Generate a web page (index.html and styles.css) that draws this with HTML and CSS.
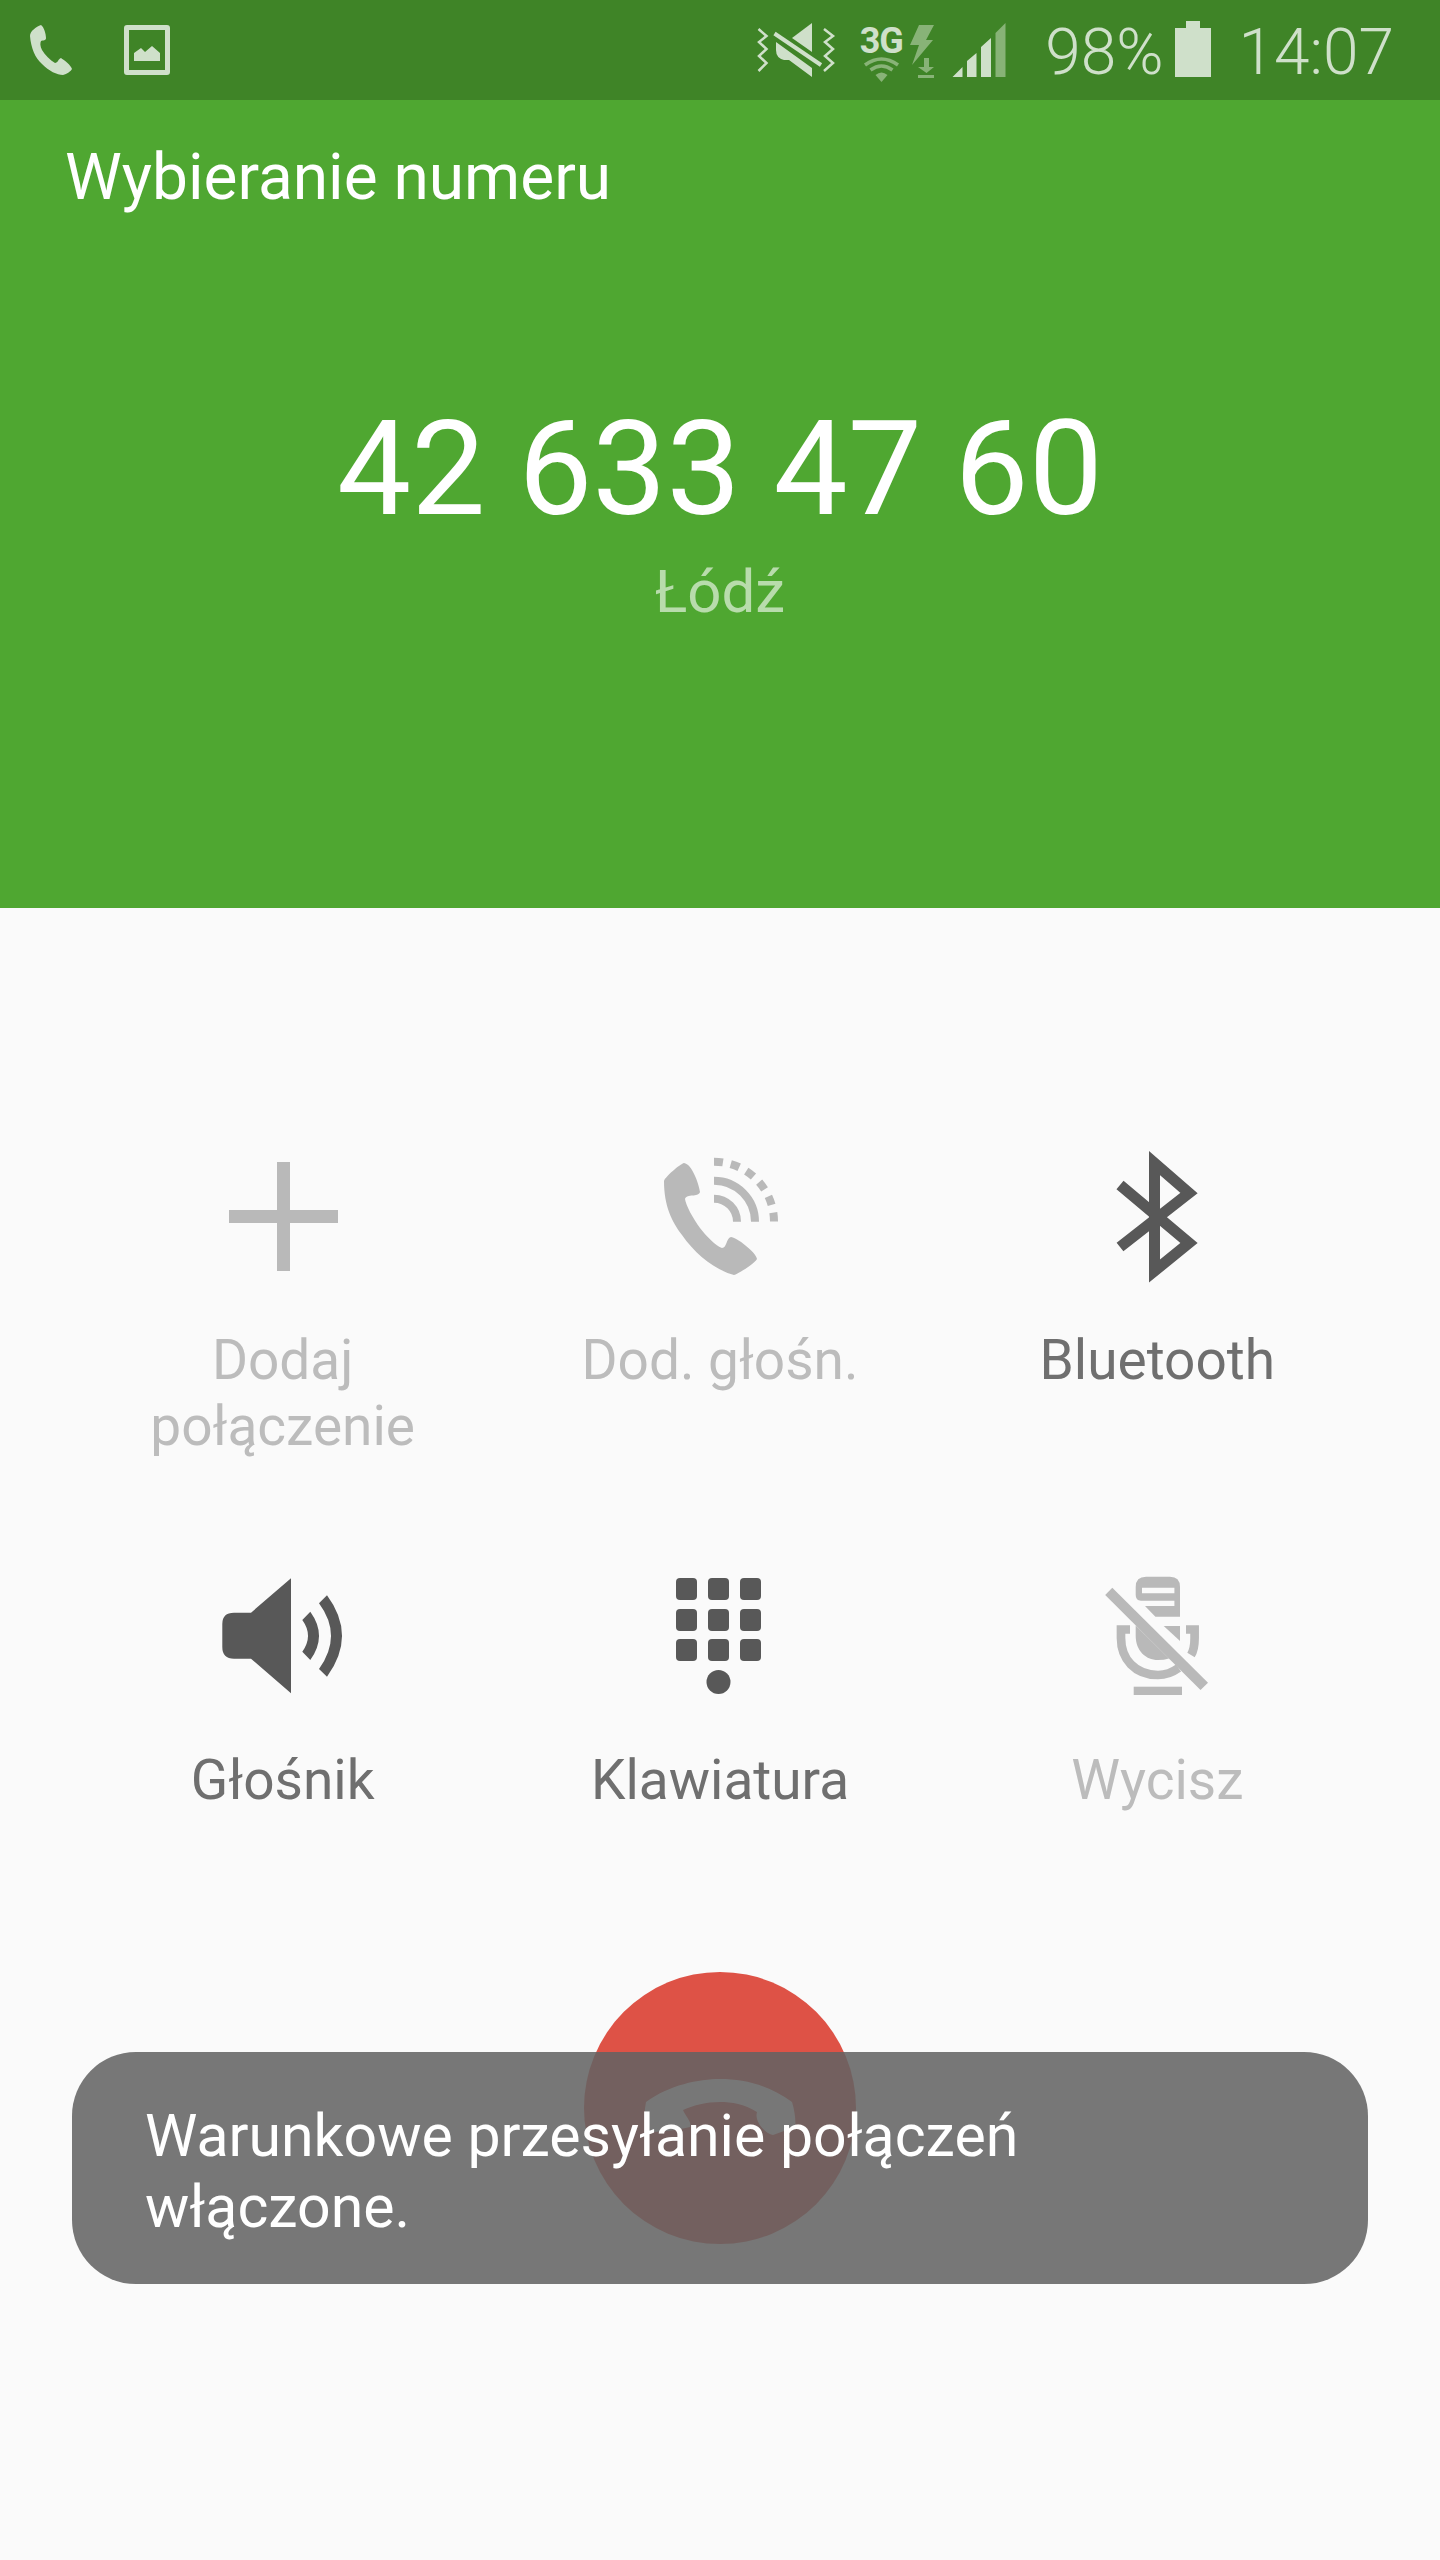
FILE: index.html
```html
<!DOCTYPE html>
<html lang="pl">
<head>
  <meta charset="UTF-8">
  <meta name="viewport" content="width=device-width, initial-scale=1.0">
  <title>Wybieranie numeru</title>
  <link rel="stylesheet" href="styles.css">
</head>
<body>
  <div class="screen">
    <div class="status-bar">
      <svg class="st-phone" width="42" height="100" viewBox="0 0 42 100">
        <path d="M11 25 C6 27 0 31 0 36 C1 48 5 58 12 64 C19 71 27 75 33 75 C37 74 41 71 42 69 C41 65 34 60 31 58 C28 59 28 63 25 63 C20 60 15 55 12 50 C10 46 10 43 11 41 C13 40 16 41 16 38 C16 34 14 27 11 25Z"/>
      </svg>
      <svg class="st-picture" width="46" height="100" viewBox="0 0 46 100">
        <path fill-rule="evenodd" d="M3 25 H43 Q46 25 46 28 V72 Q46 75 43 75 H3 Q0 75 0 72 V28 Q0 25 3 25Z M5 30 V70 H41 V30Z"/>
        <path d="M10 61 V53 L17 48 L21 52 L28 46 L36 53 V61Z"/>
      </svg>
      <svg class="st-mute" width="80" height="100" viewBox="0 0 80 100">
        <path class="line" d="M2.5 29 L10.5 36 L3 42 L10.5 49 L3 56 L10.5 63 L2.5 71"/>
        <path class="line" d="M68 29 L77 36 L69 42 L77 49 L69 56 L77 63 L68 71"/>
        <path d="M56 23 L36 38 L56 52Z"/>
        <path d="M20 42 L56 68 V77 L33 60 H28 Q20 58 20 50Z"/>
        <path class="line slash" d="M18.5 33.5 L65 65"/>
      </svg>
      <div class="st-network">
        <span class="st-3g">3G</span>
        <svg class="st-wifi" width="37" height="26" viewBox="0 0 37 26">
          <path class="arc" d="M2 9 Q18.5 -3 35 9"/>
          <path class="arc" d="M7.5 14 Q18.5 6 29.5 14"/>
          <path d="M18.5 26 L12.5 19 Q18.5 14 24.5 19Z" class="fill"/>
        </svg>
      </div>
      <svg class="st-charge" width="25" height="100" viewBox="0 0 25 100">
        <path d="M9 25 H24 L16 40 H23 L2 65 L9 45 H0Z"/>
        <path d="M14 58 H19 V67 H24 L16.5 73 L8 67 H14Z M8 75 H24 V78 H8Z"/>
      </svg>
      <svg class="st-signal" width="54" height="100" viewBox="0 0 54 100">
        <path d="M0.5 77 L10.5 67 V77Z M15 77 V61 L24.5 53 V77Z M29 77 V47 L39 38 V77Z"/>
        <path class="dim" d="M43.5 77 V33 L53.5 23 V77Z"/>
      </svg>
      <span class="st-percent">98%</span>
      <svg class="st-battery" width="36" height="100" viewBox="0 0 36 100">
        <path d="M11 21 H25 V28 H36 V77 H0 V28 H11Z"/>
      </svg>
      <span class="st-time">14:07</span>
    </div>

    <div class="call-header">
      <div class="call-state">Wybieranie numeru</div>
      <div class="call-number">42 633 47 60</div>
      <div class="call-place">Łódź</div>
    </div>

    <div class="call-body">
      <div class="actions">
        <div class="action disabled">
          <svg width="160" height="140" viewBox="0 0 160 140">
            <path d="M74 16 H87 V64 H135 V77 H87 V125 H74 V77 H26 V64 H74Z"/>
          </svg>
          <div class="action-label">Dodaj<br>połączenie</div>
        </div>
        <div class="action disabled">
          <svg width="160" height="140" viewBox="0 0 160 140">
            <path d="M44 17 C40 18 25 31 24 35 C24 60 32 76 42 89 C55 108 75 124 94 129 C98 128 114 118 117 113 C116 106 96 91 91 91 C86 92 87 102 82 102 C76 100 66 90 60 82 C53 72 46 60 45 53 C47 47 58 52 60 46 C59 38 52 18 44 17Z"/>
            <path class="wave" d="M74 52.7 A23 23 0 0 1 97 75.7"/>
            <path class="wave" d="M74 34.7 A41 41 0 0 1 115 75.7"/>
            <path class="wave" stroke-dasharray="9 8" d="M74 15.7 A60 60 0 0 1 134 75.7"/>
          </svg>
          <div class="action-label">Dod. głośn.</div>
        </div>
        <div class="action">
          <svg width="160" height="140" viewBox="0 0 160 140">
            <path class="bt" d="M43 39 L112 97 L77.5 125 V17 L112 47 L43 101"/>
          </svg>
          <div class="action-label">Bluetooth</div>
        </div>
        <div class="action">
          <svg width="160" height="140" viewBox="0 0 160 140">
            <path d="M31 46.7 H48 L88 12.3 V127.3 L48 92.7 H31 Q19.3 92.7 19.3 81 V58 Q19.3 46.7 31 46.7Z"/>
            <path d="M99.3 54 L107.3 45.7 Q124.7 69.7 107.3 94 L99.3 85.7 Q110.7 69.7 99.3 54Z"/>
            <path d="M116 37.3 L124 29.3 Q154 69.7 124 110.7 L116 103 Q140 69.7 116 37.3Z"/>
          </svg>
          <div class="action-label">Głośnik</div>
        </div>
        <div class="action">
          <svg width="160" height="140" viewBox="0 0 160 140">
            <rect x="36" y="12" width="21" height="22" rx="4"/>
            <rect x="68" y="12" width="21" height="22" rx="4"/>
            <rect x="100" y="12" width="21" height="22" rx="4"/>
            <rect x="36" y="43" width="21" height="22" rx="4"/>
            <rect x="68" y="43" width="21" height="22" rx="4"/>
            <rect x="100" y="43" width="21" height="22" rx="4"/>
            <rect x="36" y="73" width="21" height="22" rx="4"/>
            <rect x="68" y="73" width="21" height="22" rx="4"/>
            <rect x="100" y="73" width="21" height="22" rx="4"/>
            <circle cx="78.5" cy="116" r="12"/>
          </svg>
          <div class="action-label">Klawiatura</div>
        </div>
        <div class="action disabled">
          <svg width="160" height="140" viewBox="0 0 160 140">
            <path fill-rule="evenodd" d="M58.7 21 Q58.7 10.7 69 10.7 H93 Q103 10.7 103 21 V50.7 H78.4 L68 40 H97.4 V34.7 H64 Q58.7 34.7 58.7 29Z M65 21.7 V27.3 H97.4 V21.7Z"/>
            <path d="M86.7 60 H103 V75Z"/>
            <path d="M58.7 59.5 V70 C58.7 84 68 94 81 94 Q87 94 92 92.5Z"/>
            <path class="mic-arm" d="M53 63.5 H44 V72 C44 93 58 109 81 109 C90 109 96 106 101.5 102"/>
            <path class="mic-arm" d="M109 63.5 H117.6 V72 C117.6 78 116.5 85 114 89"/>
            <path d="M28.2 29 L35.3 21.7 L131 116.7 L123.5 124Z"/>
            <rect x="56.7" y="120.7" width="48.3" height="8.3"/>
          </svg>
          <div class="action-label">Wycisz</div>
        </div>
      </div>

      <div class="end-call">
        <svg width="272" height="272" viewBox="0 0 272 272">
          <path d="M63 160 C60 150 60 140 62 130 C85 113 115 107 136 107 C160 107 185 113 208 130 C211 140 212 150 211 155 L189 163 C182 162 170 150 173 140 C160 132 148 130 136 130 C122 130 110 133 99 138 C102 145 108 150 106 155 C95 158 75 160 63 160Z"/>
        </svg>
      </div>
    </div>

    <div class="toast">Warunkowe przesyłanie połączeń włączone.</div>
  </div>
</body>
</html>
```

FILE: styles.css
```css
body {
  margin: 0;
  font-family: Roboto, "Noto Sans", sans-serif;
}

.screen {
  position: relative;
  width: 1440px;
  height: 2560px;
  overflow: hidden;
  background-color: #fafafa;
}

/* status bar */
.status-bar {
  display: flex;
  align-items: center;
  height: 100px;
  padding: 0 46px 0 30px;
  box-sizing: border-box;
  background-color: #3f8427;
  color: #cfe0ca;
  fill: #cfe0ca;
}

.st-picture {
  margin-left: 52px;
}

.st-mute {
  margin-left: auto;
}

.line {
  fill: none;
  stroke: #cfe0ca;
  stroke-width: 2.5;
}

.slash {
  stroke-width: 4;
}

.st-network {
  display: flex;
  flex-direction: column;
  align-items: center;
  width: 42px;
  margin-left: 24px;
  padding-top: 8px;
}

.st-3g {
  height: 30px;
  font-size: 36px;
  font-weight: 700;
  line-height: 30px;
  letter-spacing: -1px;
}

.st-wifi .arc {
  fill: none;
  stroke: #88b377;
  stroke-width: 3.5;
}

.st-wifi .fill {
  fill: #88b377;
}

.st-charge {
  margin-left: 8px;
  fill: #88b377;
}

.st-signal {
  margin-left: 17px;
}

.st-signal .dim {
  fill: #88b377;
}

.st-percent,
.st-time {
  font-size: 64px;
  font-weight: 300;
  line-height: 100px;
  padding-top: 5px;
}

.st-percent {
  margin-left: 39px;
}

.st-battery {
  margin-left: 11px;
}

.st-time {
  margin-left: 28px;
}

/* green part */
.call-header {
  height: 808px;
  box-sizing: border-box;
  padding-top: 42px;
  background-color: #4fa731;
  color: #fff;
  text-align: center;
}

.call-state {
  padding-left: 65px;
  font-size: 64px;
  line-height: 72px;
  text-align: left;
}

.call-number {
  margin-top: 180px;
  font-size: 132px;
  line-height: 150px;
}

.call-place {
  margin-top: 13px;
  font-size: 60px;
  line-height: 70px;
  color: rgba(255, 255, 255, 0.6);
}

/* buttons */
.call-body {
  padding-top: 238px;
}

.actions {
  display: grid;
  grid-template-columns: repeat(3, 1fr);
  grid-template-rows: 420px 400px;
  padding: 0 64px;
}

.action {
  display: flex;
  flex-direction: column;
  align-items: center;
  fill: #585858;
  color: #6f6f6f;
}

.action.disabled {
  fill: #b9b9b9;
  color: #bcbcbc;
}

.action-label {
  margin-top: 41px;
  font-size: 55px;
  line-height: 66px;
  text-align: center;
}

.wave {
  fill: none;
  stroke: #b9b9b9;
  stroke-width: 8;
}

.bt {
  fill: none;
  stroke: #585858;
  stroke-width: 11;
  stroke-miterlimit: 10;
}

.mic-arm {
  fill: none;
  stroke: #b9b9b9;
  stroke-width: 8.7;
}

.end-call {
  width: 272px;
  height: 272px;
  margin: 6px auto 0;
  border-radius: 50%;
  background-color: #de5246;
  fill: #fff;
}

/* toast over the end call button */
.toast {
  position: absolute;
  left: 72px;
  top: 2052px;
  width: 1296px;
  height: 232px;
  box-sizing: border-box;
  padding: 48px 250px 0 73px;
  border-radius: 64px;
  background-color: rgba(99, 99, 99, 0.87);
  color: #fff;
  font-size: 59px;
  line-height: 71px;
}
```
